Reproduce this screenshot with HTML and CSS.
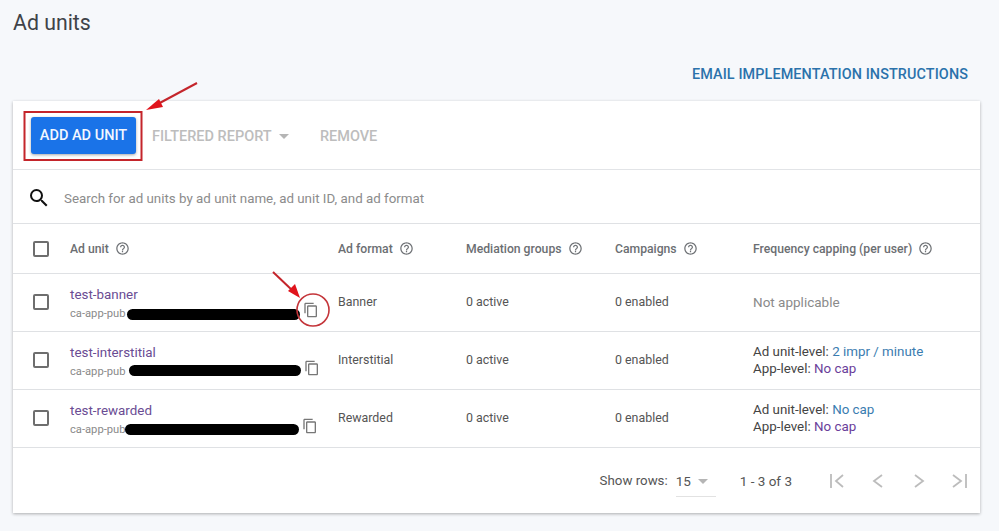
FILE: index.html
```html
<!DOCTYPE html>
<html>

<head>
  <meta charset="UTF-8">
  <title>Ad units</title>
  <link rel="stylesheet" href="styles.css">
</head>

<body>
  <svg width="0" height="0" class="defs">
    <symbol id="help" viewBox="0 0 24 24">
      <path fill="currentColor" d="M11 18h2v-2h-2v2zm1-16C6.48 2 2 6.48 2 12s4.48 10 10 10 10-4.48 10-10S17.52 2 12 2zm0 18c-4.41 0-8-3.59-8-8s3.59-8 8-8 8 3.59 8 8-3.59 8-8 8zm0-14c-2.21 0-4 1.79-4 4h2c0-1.1.9-2 2-2s2 .9 2 2c0 2-3 1.75-3 5h2c0-2.25 3-2.5 3-5 0-2.21-1.79-4-4-4z" />
    </symbol>
    <symbol id="copy" viewBox="0 0 24 24">
      <path fill="currentColor" d="M16 1H4c-1.1 0-2 .9-2 2v14h2V3h12V1zm3 4H8c-1.1 0-2 .9-2 2v14c0 1.1.9 2 2 2h11c1.1 0 2-.9 2-2V7c0-1.1-.9-2-2-2zm0 16H8V7h11v14z" />
    </symbol>
  </svg>

  <h1 class="page-title">Ad units</h1>
  <div class="email-row"><a class="email-link">EMAIL IMPLEMENTATION INSTRUCTIONS</a></div>

  <div class="card">
    <div class="toolbar">
      <button class="primary-btn">ADD AD UNIT</button>
      <span class="flat-btn report-btn">FILTERED REPORT <i class="caret"></i></span>
      <span class="flat-btn">REMOVE</span>
    </div>

    <div class="search">
      <svg class="search-icon" viewBox="0 0 24 24"><path fill="#111" d="M15.5 14h-.79l-.28-.27A6.47 6.47 0 0 0 16 9.5 6.5 6.5 0 1 0 9.5 16c1.61 0 3.09-.59 4.23-1.57l.27.28v.79l5 4.99L20.49 19l-4.99-5zm-6 0C7.01 14 5 11.99 5 9.5S7.01 5 9.5 5 14 7.01 14 9.5 11.99 14 9.5 14z" /></svg>
      <span class="search-text">Search for ad units by ad unit name, ad unit ID, and ad format</span>
    </div>

    <div class="row head">
      <div class="cell-check"><i class="checkbox"></i></div>
      <div>Ad unit <svg class="help"><use href="#help" /></svg></div>
      <div>Ad format <svg class="help"><use href="#help" /></svg></div>
      <div>Mediation groups <svg class="help"><use href="#help" /></svg></div>
      <div>Campaigns <svg class="help"><use href="#help" /></svg></div>
      <div>Frequency capping (per user) <svg class="help"><use href="#help" /></svg></div>
    </div>

    <div class="row">
      <div class="cell-check"><i class="checkbox"></i></div>
      <div class="unit">
        <a class="unit-name">test-banner</a>
        <div class="unit-id">
          <span>ca-app-pub</span><i class="redact redact-a"></i><svg class="copy"><use href="#copy" /></svg>
        </div>
      </div>
      <div>Banner</div>
      <div>0 active</div>
      <div>0 enabled</div>
      <div class="muted">Not applicable</div>
    </div>

    <div class="row">
      <div class="cell-check"><i class="checkbox"></i></div>
      <div class="unit">
        <a class="unit-name">test-interstitial</a>
        <div class="unit-id">
          <span>ca-app-pub</span><i class="redact redact-b"></i><svg class="copy"><use href="#copy" /></svg>
        </div>
      </div>
      <div>Interstitial</div>
      <div>0 active</div>
      <div>0 enabled</div>
      <div class="capping">
        <div>Ad unit-level: <a class="link-blue">2 impr / minute</a></div>
        <div>App-level: <a class="link-purple">No cap</a></div>
      </div>
    </div>

    <div class="row">
      <div class="cell-check"><i class="checkbox"></i></div>
      <div class="unit">
        <a class="unit-name">test-rewarded</a>
        <div class="unit-id">
          <span>ca-app-pub</span><i class="redact redact-c"></i><svg class="copy"><use href="#copy" /></svg>
        </div>
      </div>
      <div>Rewarded</div>
      <div>0 active</div>
      <div>0 enabled</div>
      <div class="capping">
        <div>Ad unit-level: <a class="link-blue">No cap</a></div>
        <div>App-level: <a class="link-purple">No cap</a></div>
      </div>
    </div>

    <div class="footer">
      <span>Show rows:</span>
      <span class="rows-select">15 <i class="caret"></i></span>
      <span class="range">1 - 3 of 3</span>
      <svg class="pager" viewBox="0 0 144 16">
        <g fill="none" stroke="#bcbcbc" stroke-width="1.8">
          <path d="M7 1v14M19 2 12 8l7 6" />
          <path d="M58 2 50 8l8 6" />
          <path d="M91 2l8 6-8 6" />
          <path d="M129 2l8 6-8 6M142 1v14" />
        </g>
      </svg>
    </div>
  </div>

  <!-- red notes drawn on top of the screenshot -->
  <svg class="notes" viewBox="0 0 999 531">
    <rect x="24.5" y="112" width="117" height="48" fill="none" stroke="#c4252b" stroke-width="2" />
    <path d="M197 83 156 105" stroke="#c4252b" stroke-width="2" fill="none" />
    <path d="M146 110 159 99 163 107z" fill="#e0141c" />
    <path d="M273 272 293 291" stroke="#c4252b" stroke-width="2" fill="none" />
    <path d="M300 298 288 291 295 284z" fill="#e0141c" />
    <circle cx="313" cy="310" r="16" fill="none" stroke="#c4353a" stroke-width="1.6" />
  </svg>
</body>

</html>
```

FILE: styles.css
```css
* {
  font-family: Roboto, "Liberation Sans", sans-serif;
  margin: 0;
  padding: 0;
  box-sizing: border-box;
}

body {
  background-color: #f6f8fb;
  color: #4a4a4a;
  position: relative;
  height: 531px;
  overflow: hidden;
  padding: 0 19px 0 13px;
}

.defs {
  position: absolute;
}

.page-title {
  font-size: 21.3px;
  font-weight: 400;
  line-height: 24px;
  padding-top: 11px;
  height: 35px;
  color: #3f4348;
}

.email-row {
  display: flex;
  justify-content: flex-end;
  padding: 31px 12px 0 0;
  height: 66px;
}

.email-link {
  font-size: 14.4px;
  font-weight: 500;
  line-height: 18px;
  color: #2b72ab;
  letter-spacing: 0.1px;
}

.card {
  background-color: #fff;
  box-shadow: 0 1px 3px rgba(0, 0, 0, 0.3);
  height: 412px;
}

.toolbar {
  display: flex;
  align-items: center;
  height: 69px;
  padding: 0 0 0 18px;
  border-bottom: 1px solid #e2e4e7;
}

.primary-btn {
  width: 105px;
  height: 37px;
  padding-top: 1px;
  border: none;
  border-radius: 3px;
  background-color: #1a73e8;
  color: #f2f7ff;
  font-size: 14.5px;
  font-weight: 500;
  box-shadow: 0 1px 3px rgba(0, 0, 0, 0.35);
}

.flat-btn {
  padding-top: 2px;
  font-size: 14.5px;
  font-weight: 500;
  color: #bdbdbd;
}

.report-btn {
  margin: 0 31px 0 16px;
}

.caret {
  display: inline-block;
  border-top: 5px solid #b5b5b5;
  border-left: 5px solid transparent;
  border-right: 5px solid transparent;
  margin-left: 4px;
  vertical-align: 2px;
}

.search {
  display: flex;
  align-items: center;
  height: 54px;
  padding: 2px 0 0 14px;
  font-size: 13.35px;
  color: #8c8c8c;
  border-bottom: 1px solid #dfe1e4;
}

.search-icon {
  width: 24px;
  height: 24px;
  margin-right: 13px;
}

.search-text {
  padding-top: 2px;
}

.row {
  display: grid;
  grid-template-columns: 57px 268px 128px 149px 138px 1fr;
  align-items: center;
  height: 58px;
  padding-bottom: 2px;
  font-size: 12.4px;
  color: #555;
  border-bottom: 1px solid #dfe1e4;
}

.row.head {
  height: 50px;
  padding-bottom: 0;
  font-size: 12.2px;
  font-weight: 500;
  color: #6b6e72;
}

.help {
  width: 15px;
  height: 15px;
  color: #6f7276;
  margin-left: 3px;
  vertical-align: -3px;
}

.cell-check {
  padding-left: 20px;
}

.checkbox {
  display: block;
  width: 16px;
  height: 16px;
  border: 2px solid #6e6e6e;
  border-radius: 2px;
}

.unit {
  padding-top: 5px;
}

.unit-name {
  display: block;
  font-size: 13.4px;
  line-height: 16px;
  color: #6a4c93;
}

.unit-id {
  display: flex;
  align-items: center;
  font-size: 11.2px;
  height: 16px;
  margin-top: 2px;
  color: #8a8a8a;
}

.redact {
  display: block;
  height: 11px;
  border-radius: 6px;
  background-color: #000;
}

.redact-a {
  width: 173px;
  margin: 2px 0 0 1px;
}

.redact-b {
  width: 172px;
  margin: 0 0 2px 3px;
}

.redact-c {
  width: 174px;
  margin-left: -1px;
}

.copy {
  width: 16px;
  height: 16px;
  margin: 0 0 7px 3px;
  color: #777;
}

.muted {
  color: #8a8a8a;
  font-size: 13.5px;
}

.capping {
  font-size: 13.36px;
  line-height: 17px;
  padding-top: 1px;
  color: #444;
}

.link-blue {
  color: #3a7cb0;
}

.link-purple {
  color: #6a3d9a;
}

.footer {
  display: flex;
  align-items: center;
  justify-content: flex-end;
  height: 65px;
  padding-right: 12px;
  font-size: 13.3px;
  color: #555;
}

.rows-select {
  width: 40px;
  height: 32px;
  line-height: 32px;
  margin: 0 0 0 8px;
  font-size: 13.5px;
  border-bottom: 1px solid #e2e2e2;
}

.range {
  margin: 0 32px 0 24px;
  font-size: 13.5px;
}

.pager {
  width: 144px;
  height: 16px;
}

.notes {
  position: absolute;
  left: 0;
  top: 0;
  width: 999px;
  height: 531px;
  pointer-events: none;
}
```
